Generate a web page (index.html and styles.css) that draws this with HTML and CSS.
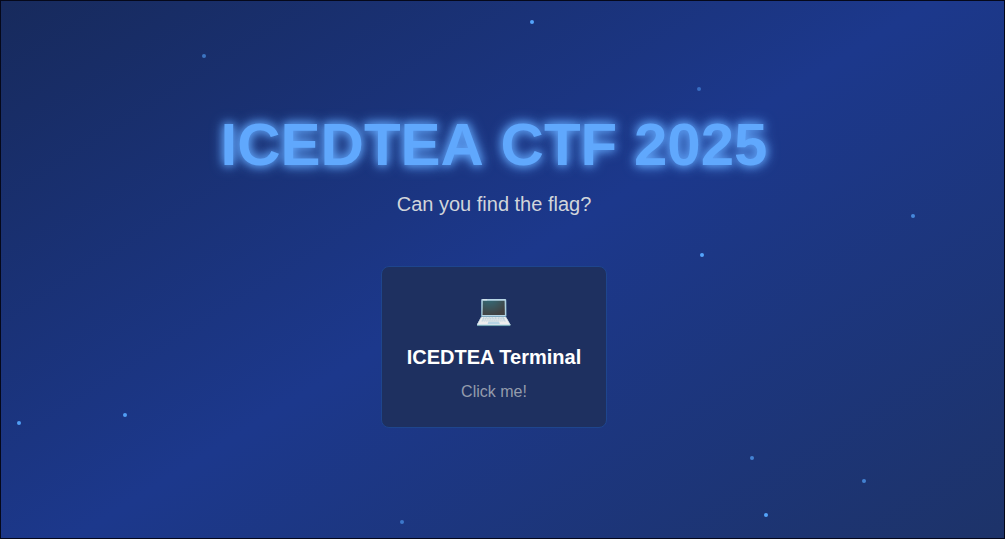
FILE: index.html
```html
<!DOCTYPE html>
<html lang="en">
<head>
<meta charset="utf-8">
<meta name="viewport" content="width=device-width, initial-scale=1">
<title>ICEDTEA CTF 2025</title>
<link rel="stylesheet" href="styles.css">
</head>
<body>
<div class="stars" aria-hidden="true">
  <span class="star" style="left:530px;top:20px;opacity:1"></span>
  <span class="star" style="left:202px;top:54px;opacity:.6"></span>
  <span class="star" style="left:697px;top:87px;opacity:.5"></span>
  <span class="star" style="left:911px;top:214px;opacity:.75"></span>
  <span class="star" style="left:700px;top:253px;opacity:1"></span>
  <span class="star" style="left:17px;top:421px;opacity:.95"></span>
  <span class="star" style="left:123px;top:413px;opacity:.95"></span>
  <span class="star" style="left:750px;top:456px;opacity:.7"></span>
  <span class="star" style="left:862px;top:479px;opacity:.7"></span>
  <span class="star" style="left:764px;top:513px;opacity:1"></span>
  <span class="star" style="left:400px;top:520px;opacity:.6"></span>
</div>
<main class="hero">
  <h1 class="title">ICEDTEA CTF 2025</h1>
  <p class="subtitle">Can you find the flag?</p>
  <button class="card" type="button">
    <span class="card-icon" aria-hidden="true">💻</span>
    <span class="card-title">ICEDTEA Terminal</span>
    <span class="card-text">Click me!</span>
  </button>
</main>
</body>
</html>
```
FILE: styles.css
```css
* {
  box-sizing: border-box;
}

body {
  position: relative;
  display: flex;
  min-height: 100vh;
  margin: 0;
  overflow: hidden;
  border: 1px solid #05081a;
  background: linear-gradient(148deg, #172a5c, #1c388c 50%, #1d3369);
  font-family: "Liberation Sans", Arial, sans-serif;
}

.stars {
  position: absolute;
  inset: -1px;
}

.star {
  position: absolute;
  width: 4px;
  height: 4px;
  border-radius: 50%;
  background: #54a4fb;
}

.hero {
  position: relative;
  flex: 1;
  display: flex;
  flex-direction: column;
  align-items: center;
  justify-content: center;
  padding: 4px 17px 0 0;
}

.title {
  margin: 0 0 15px;
  color: #60a8fd;
  font-size: 60px;
  font-kerning: none;
  line-height: 60px;
  text-align: center;
  text-shadow: 0 0 8px #60a5fa, 0 0 14px #60a5fa;
}

.subtitle {
  margin: 0 0 48px;
  color: #d1d5db;
  font-size: 20px;
  line-height: 28px;
}

.card {
  display: flex;
  flex-direction: column;
  align-items: center;
  padding: 24px 25px 22px;
  border: 1px solid #1e458e;
  border-radius: 8px;
  background: #1e3060;
  font-family: inherit;
  cursor: pointer;
}

.card-icon {
  margin-bottom: 14px;
  font-size: 30px;
  line-height: 38px;
}

.card-title {
  margin-bottom: 8px;
  color: #fff;
  font-size: 20px;
  font-weight: 700;
  line-height: 28px;
}

.card-text {
  color: #949cac;
  font-size: 16px;
  line-height: 26px;
}
```
